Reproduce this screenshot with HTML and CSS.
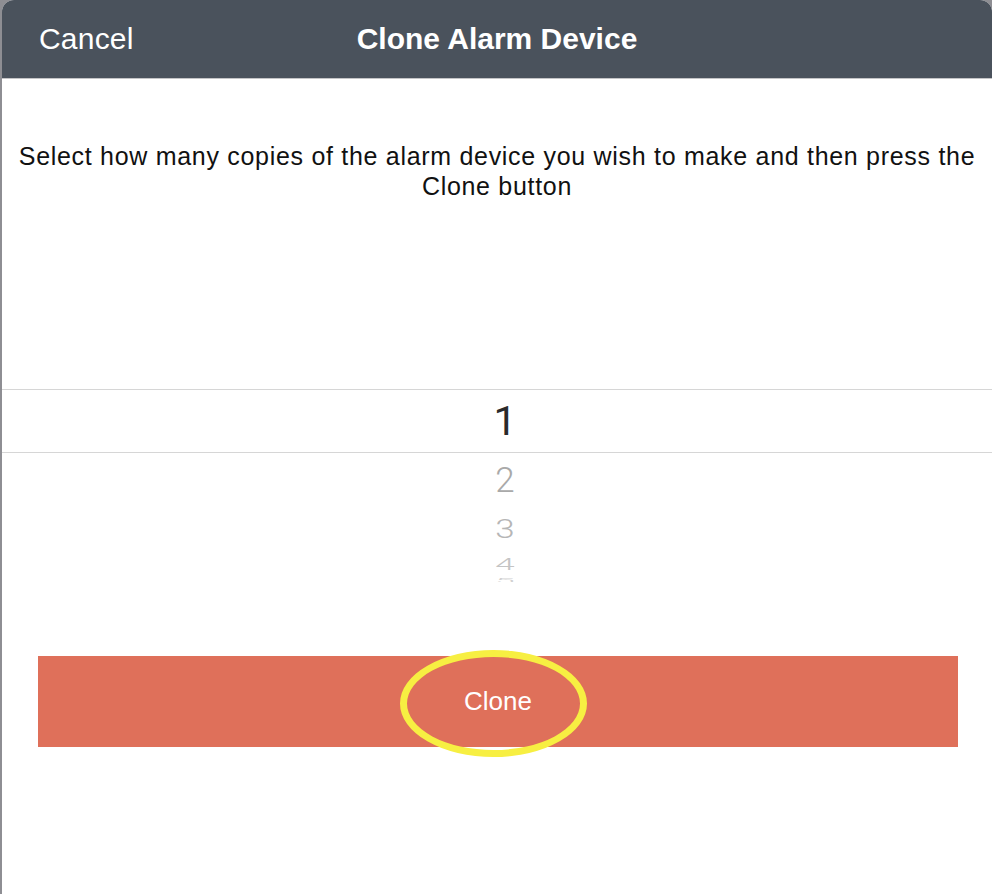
FILE: index.html
```html
<!DOCTYPE html>
<html lang="en">
<head>
  <meta charset="UTF-8">
  <title>Clone Alarm Device</title>
  <link rel="stylesheet" href="styles.css">
</head>
<body>
  <div class="sheet">
    <div class="topbar">
      <span class="cancel">Cancel</span>
      <span class="title">Clone Alarm Device</span>
      <span></span>
    </div>

    <p class="intro">Select how many copies of the alarm device you wish to make and then press the Clone button</p>

    <div class="picker">
      <div class="row selected"><span>1</span></div>
      <div class="row r2"><span>2</span></div>
      <div class="row r3"><span>3</span></div>
      <div class="row r4"><span>4</span></div>
      <div class="row r5"><span>5</span></div>
    </div>

    <div class="clone-btn">
      Clone
      <span class="ring"></span>
    </div>
  </div>
</body>
</html>
```

FILE: styles.css
```css
html, body {
  margin: 0;
  height: 100%;
}

body {
  background-color: #8e8e93;
  font-family: "Liberation Sans", Arial, sans-serif;
  overflow: hidden;
}

.sheet {
  margin-left: 2px;
  height: 100%;
  background-color: #fff;
  border-radius: 12px 12px 0 0;
  overflow: hidden;
}

.topbar {
  height: 78px;
  background-color: #4a525c;
  border-bottom: 1px solid #c4c4c6;
  color: #fff;
  display: grid;
  grid-template-columns: 1fr auto 1fr;
  align-items: center;
}

.cancel {
  font-size: 30px;
  letter-spacing: 0.2px;
  padding-left: 37px;
}

.title {
  font-size: 30px;
  font-weight: bold;
}

.intro {
  margin: 0;
  padding: 62px 8px 0;
  font-size: 25px;
  letter-spacing: 0.7px;
  line-height: 30px;
  text-align: center;
  color: #111;
}

.picker {
  margin-top: 188px;
  height: 193px;
  overflow: hidden;
  font-family: Roboto, "Liberation Sans", sans-serif;
  font-weight: 300;
}

.row {
  display: flex;
  align-items: center;
  justify-content: center;
  padding-left: 16px;
}

.row span {
  display: inline-block;
}

.selected {
  height: 62px;
  border-top: 1px solid #d6d6d6;
  border-bottom: 1px solid #d6d6d6;
  font-size: 41px;
  font-weight: 400;
  color: #2a2a2a;
}

.r2 {
  height: 54px;
  font-size: 35px;
  color: #a9a9a9;
}

.r3 {
  height: 44px;
  font-size: 35px;
  color: #b6b6b6;
}

.r3 span {
  transform: scaleY(0.72);
}

.r4 {
  height: 26px;
  font-size: 35px;
  color: #c4c4c4;
}

.r4 span {
  transform: scaleY(0.45);
}

.r5 {
  height: 12px;
  font-size: 35px;
  line-height: 1;
  color: #d0d0d0;
  align-items: flex-start;
}

.r5 span {
  transform: scaleY(0.2);
  transform-origin: top;
}

.clone-btn {
  position: relative;
  margin: 74px 34px 0 36px;
  height: 91px;
  background-color: #df705a;
  color: #fff;
  font-size: 26px;
  display: flex;
  align-items: center;
  justify-content: center;
}

.ring {
  position: absolute;
  left: calc(50% - 98px);
  top: -6px;
  width: 173px;
  height: 93px;
  border: 7px solid #f7ef42;
  border-radius: 50%;
}
```
